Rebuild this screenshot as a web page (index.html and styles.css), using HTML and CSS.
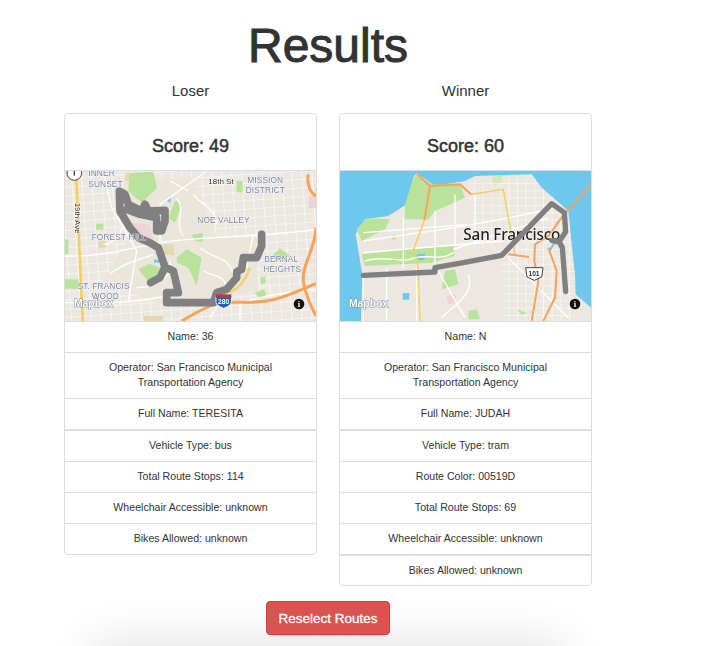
FILE: index.html
```html
<!DOCTYPE html>
<html lang="en">
<head>
  <meta charset="UTF-8">
  <meta name="viewport" content="width=device-width, initial-scale=1.0">
  <title>Results</title>
  <link rel="stylesheet" href="styles.css">
</head>
<body>
  <div class="page">
    <h1>Results</h1>

    <div class="columns">
      <div class="column">
        <h4>Loser</h4>
        <div class="panel">
          <div class="panel-heading">Score: 49</div>
          <svg class="map" viewBox="15 30 753 450">
            <defs>
              <pattern id="grid1" width="30" height="26" patternUnits="userSpaceOnUse" patternTransform="rotate(-4)">
                <path d="M0 0H30M0 0V26" stroke="#fff" stroke-width="3" fill="none"/>
              </pattern>
            </defs>
            <rect x="15" y="30" width="753" height="450" fill="#ece8e1"/>
            <rect x="15" y="30" width="753" height="450" fill="url(#grid1)"/>
            <path d="M190 60L400 50L470 230L600 230L590 390L460 410L300 430L130 360L200 240Z" fill="#ebe6dc"/>
            <rect x="530" y="60" width="18" height="34" fill="#b9e29a"/>
            <rect x="745" y="105" width="23" height="36" fill="#ecd5d8"/>
            <rect x="310" y="250" width="32" height="32" fill="#e3d9ae"/>
            <rect x="195" y="36" width="50" height="24" fill="#e3d9ae"/>
            <rect x="15" y="355" width="40" height="28" fill="#b9e29a"/>
            <rect x="15" y="235" width="10" height="45" fill="#b9e29a"/>
            <rect x="108" y="188" width="22" height="18" fill="#b9e29a"/>
            <rect x="115" y="240" width="24" height="20" fill="#e3d9ae"/>
            <rect x="250" y="465" width="60" height="15" fill="#e3d9ae"/>
            <path d="M210 36L280 32L292 80L245 125L205 90Z" fill="#b9e29a"/>
            <path d="M345 120L365 130L345 185L325 170Z" fill="#b9e29a"/>
            <path d="M350 290L380 265L425 290L410 375L385 320L352 305Z" fill="#b9e29a"/>
            <path d="M235 325L270 308L300 320L290 345L262 358Z" fill="#b9e29a"/>
            <path d="M635 285L660 262L690 285L650 300Z" fill="#b9e29a"/>
            <path d="M585 395L610 385L620 400L600 415Z" fill="#b9e29a"/>
            <path d="M600 350L615 345L618 365L603 370Z" fill="#b9e29a"/>
            <path d="M395 222L428 216L428 244L405 240Z" fill="#b9e29a"/>
            <path d="M215 185L270 190L280 235L235 235Z" fill="#ecd5d8"/>
            <path d="M320 120L332 112L332 125Z" fill="#6ec8ee"/>
            <rect x="282" y="296" width="16" height="9" fill="#6ec8ee"/>
            <g class="streets">
              <path d="M15 285C120 290 220 260 300 245C420 225 600 230 768 205"/>
              <path d="M15 425C150 430 250 420 320 405M540 430C560 420 620 400 768 385"/>
              <path d="M440 30L300 130L300 240M330 60L385 90M130 30L155 140L230 270L205 420"/>
              <path d="M580 220L560 320M370 225C340 180 380 150 350 110"/>
              <path d="M150 340C180 310 230 300 280 280M450 470L470 440M540 480V430"/>
              <path d="M420 260C470 300 500 280 520 340M430 330C470 350 490 340 500 380M330 300C340 340 300 380 230 380"/>
              <path d="M400 100C430 140 460 130 470 190M210 130C180 180 200 240 130 250"/>
            </g>
            <path d="M48 30L68 480" stroke="#f6cf62" stroke-width="8" fill="none"/>
            <path d="M510 395C540 380 560 350 570 320" stroke="#f6cf62" stroke-width="7" fill="none"/>
            <g class="highways">
              <path d="M365 480C400 460 430 440 470 428C530 418 560 430 620 420C680 410 720 385 768 368"/>
              <path d="M745 40C740 70 750 95 768 105M768 200C765 270 725 310 730 360C735 400 755 440 768 465"/>
            </g>
            <path class="route" d="M605 220V255L590 290H550L545 325L530 332V350L500 385L470 395L460 425H320V395H355L345 350L340 330L315 318L300 350L272 365M315 318L295 260L270 245L235 230L210 200L180 150L178 90L195 100L205 130L245 150L255 130L265 150L315 148V180L305 210H290V170L240 160L200 145"/>
            <path d="M468 408H514V425C510 436 498 438 491 442C484 438 472 436 468 425Z" fill="#2a5ea8" stroke="#fff" stroke-width="2.5"/>
            <rect x="468" y="400" width="46" height="11" fill="#c8343c"/>
            <text class="shield" x="491" y="430">280</text>
            <text class="district" x="85" y="46">INNER</text>
            <text class="district" x="85" y="77">SUNSET</text>
            <text class="road" x="445" y="68">18th St</text>
            <text class="district" x="562" y="66">MISSION</text>
            <text class="district" x="557" y="96">DISTRICT</text>
            <text class="district" x="412" y="186">NOE VALLEY</text>
            <text class="district" x="95" y="237">FOREST HILL</text>
            <text class="district" x="613" y="304">BERNAL</text>
            <text class="district" x="610" y="334">HEIGHTS</text>
            <text class="district" x="53" y="383">ST. FRANCIS</text>
            <text class="district" x="95" y="413">WOOD</text>
            <text class="road" transform="translate(46 125) rotate(90)">19th Ave</text>
            <circle cx="43" cy="36" r="22" fill="#fff" stroke="#444" stroke-width="3"/>
            <rect x="41" y="30" width="4" height="14" fill="#444"/>
            <text class="logo" x="42" y="439">Mapbox</text>
            <circle cx="717" cy="429" r="16" fill="#111"/>
            <text class="info" x="717" y="438">i</text>
          </svg>
          <div class="row">Name: 36</div>
          <div class="row">Operator: San Francisco Municipal Transportation Agency</div>
          <div class="row">Full Name: TERESITA</div>
          <div class="row thick">Vehicle Type: bus</div>
          <div class="row">Total Route Stops: 114</div>
          <div class="row">Wheelchair Accessible: unknown</div>
          <div class="row">Bikes Allowed: unknown</div>
        </div>
      </div>

      <div class="column">
        <h4>Winner</h4>
        <div class="panel">
          <div class="panel-heading">Score: 60</div>
          <svg class="map" viewBox="15 30 753 450">
            <defs>
              <pattern id="grid2" width="26" height="22" patternUnits="userSpaceOnUse">
                <path d="M0 0H26M0 0V22" stroke="#fff" stroke-width="3" fill="none"/>
              </pattern>
              <clipPath id="landClip">
                <path d="M245 36L300 75L390 60L420 45L590 40L620 80L660 115L700 150L710 250L720 340L722 400L768 440V480H78L82 340L62 220L90 175L160 165L215 130L235 50Z"/>
              </clipPath>
            </defs>
            <rect x="15" y="30" width="753" height="450" fill="#6ec8ee"/>
            <path d="M245 36L300 75L390 60L420 45L590 40L620 80L660 115L700 150L710 250L720 340L722 400L768 440V480H78L82 340L62 220L90 175L160 165L215 130L235 50Z" fill="#ece8e1"/>
            <path d="M245 40L290 70L375 72L390 110L300 150L280 175L210 175L210 130L232 60Z" fill="#b9e29a"/>
            <path d="M65 205L95 172L165 175L150 205L80 240Z" fill="#b9e29a"/>
            <path d="M80 280L230 265L355 255L358 285L290 305L90 315Z" fill="#b9e29a"/>
            <path d="M330 330L360 325L370 370L320 385Z" fill="#b9e29a"/>
            <path d="M400 450L425 445L435 475H400Z" fill="#b9e29a"/>
            <path d="M545 445L575 455L560 462Z" fill="#b9e29a"/>
            <path d="M475 45H500V66L470 66Z" fill="#d6e6b6"/>
            <path d="M335 405L360 400L365 425L340 430Z" fill="#ecd5d8"/>
            <rect x="203" y="396" width="20" height="20" fill="#6ec8ee"/>
            <path d="M245 280L270 278L268 296L248 298Z" fill="#6ec8ee"/>
            <rect x="170" y="222" width="14" height="16" fill="#e3d9ae"/>
            <g class="streets" clip-path="url(#landClip)">
              <rect x="500" y="50" width="220" height="430" fill="url(#grid2)"/>
              <rect x="400" y="60" width="100" height="200" fill="url(#grid2)" opacity=".7"/>
              <path d="M85 240C240 215 400 200 640 145M85 215L400 190M85 275L500 240M355 265L640 170"/>
              <path d="M85 340V480M155 320V480M205 170V320M300 150V310M360 100V250M420 100V240M245 320V480M310 330L390 470M400 340C420 400 360 430 320 470M520 290L700 470"/>
              <path d="M90 300C150 280 200 310 240 290C290 280 320 300 355 275"/>
            </g>
            <path d="M768 70L660 190M640 40L768 130" stroke="#5ab3dd" stroke-width="1" fill="none"/>
            <path d="M375 72L408 100L505 85L518 160L540 280" stroke="#f6cf62" stroke-width="4.5" fill="none"/>
            <path d="M268 178L235 268L248 300L255 480" stroke="#f6cf62" stroke-width="4.5" fill="none"/>
            <g class="highways thin">
              <path d="M245 38L285 75L375 70L408 100M285 75L268 178"/>
              <path d="M768 70L680 170L640 225L600 250L598 300L610 360L590 480"/>
              <path d="M520 280L582 288M640 260L665 330L660 410L625 480"/>
            </g>
            <path d="M645 268L655 250L670 245" stroke="#6ec8ee" stroke-width="6" fill="none"/>
            <text class="city" x="385" y="238">San Francisco</text>
            <path class="route wide" d="M85 343L300 333V320L385 305L500 283L650 128L688 155L692 212L672 242L682 260L692 392M650 238L672 242"/>
            <path d="M572 320H624L620 348L598 358L576 348Z" fill="#fff" stroke="#444" stroke-width="3"/>
            <text class="shield dark" x="597" y="345">101</text>
            <text class="logo" x="42" y="439">Mapbox</text>
            <circle cx="720" cy="429" r="16" fill="#111"/>
            <text class="info" x="720" y="438">i</text>
          </svg>
          <div class="row">Name: N</div>
          <div class="row">Operator: San Francisco Municipal Transportation Agency</div>
          <div class="row">Full Name: JUDAH</div>
          <div class="row thick">Vehicle Type: tram</div>
          <div class="row">Route Color: 00519D</div>
          <div class="row">Total Route Stops: 69</div>
          <div class="row">Wheelchair Accessible: unknown</div>
          <div class="row thick tight">Bikes Allowed: unknown</div>
        </div>
      </div>
    </div>

    <div class="actions">
      <button class="btn-danger">Reselect Routes</button>
    </div>
    <div class="footer-shadow"></div>
  </div>
</body>
</html>
```

FILE: styles.css
```css
html, body { margin: 0; height: 646px; overflow: hidden; background: #fff; }
body { color: #333; font-family: "Liberation Sans", Arial, sans-serif; }
.page { width: 656px; height: 646px; overflow: hidden; }
h1 { margin: 0; padding-top: 20px; height: 52px; line-height: 52px; font-size: 48px; font-weight: 400; text-align: center; -webkit-text-stroke: 1px #333; }
.columns { display: flex; justify-content: center; align-items: flex-start; gap: 22px; }
.column { width: 253px; }
h4 { margin: 0; height: 41px; line-height: 38px; font-size: 15px; font-weight: 400; text-align: center; }
.panel { border: 1px solid #ddd; border-radius: 4px; background: #fff; overflow: hidden; }
.panel-heading { height: 56px; line-height: 64px; text-align: center; font-size: 18px; -webkit-text-stroke: 0.5px #333; border-bottom: 1px solid #ddd; }
.map { display: block; width: 251px; height: 150px; filter: blur(0.4px); }
.row { padding: 7px 34px 8px; border-top: 1px solid #ddd; font-size: 10.6px; line-height: 15px; text-align: center; }
.row.thick { border-top-width: 2px; }
.row.tight { padding-bottom: 7px; }
.actions { margin-top: 15px; text-align: center; }
.btn-danger { width: 124px; height: 34px; padding: 0; color: #fff; background: #d9534f; border: 1px solid #d43f3a; border-radius: 4px; font: 13.5px "Liberation Sans", Arial, sans-serif; -webkit-text-stroke: 0.3px #fff; }
.footer-shadow { width: 460px; height: 40px; margin: 11px auto 0; box-shadow: 0 0 44px 6px rgba(0, 0, 0, 0.11); }

/* map drawing */
.streets path { stroke: #fff; stroke-width: 4; fill: none; }
.highways path { stroke: #f9a25a; stroke-width: 9; fill: none; }
.highways.thin path { stroke-width: 6; }
.route { stroke: #808080; stroke-width: 23; fill: none; stroke-linejoin: round; stroke-linecap: round; }
.route.wide { stroke-width: 16; }
.district { fill: #7682a8; font-size: 25px; letter-spacing: 0.3px; stroke: #fff; stroke-width: 2px; paint-order: stroke; }
.road { fill: #333; font-size: 24px; stroke: #fff; stroke-width: 3px; paint-order: stroke; }
.city { fill: #222; font-size: 46px; letter-spacing: -0.6px; font-weight: 500; stroke: #fff; stroke-width: 3px; paint-order: stroke; font-family: "Noto Sans", sans-serif; }
.shield { fill: #fff; font-size: 20px; font-weight: 700; text-anchor: middle; }
.shield.dark { fill: #333; }
.logo { fill: #fff; stroke: #7d8b96; stroke-width: 3px; paint-order: stroke; font-size: 31px; font-weight: 700; }
.info { fill: #fff; font-size: 26px; font-weight: 700; text-anchor: middle; font-family: "Liberation Serif", serif; }
```
